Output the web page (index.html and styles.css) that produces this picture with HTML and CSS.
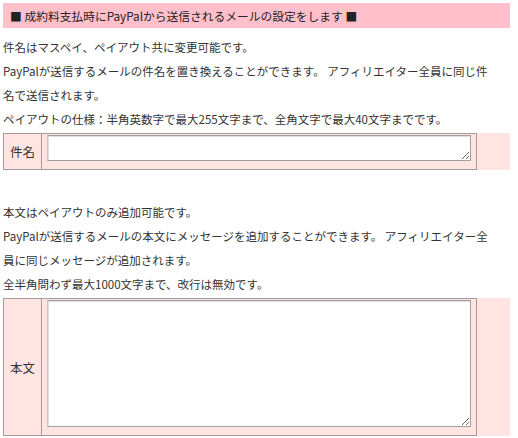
FILE: index.html
```html
<!DOCTYPE html>
<html lang="ja">
<head>
    <meta charset="UTF-8">
    <meta name="viewport" content="width=device-width, initial-scale=1.0">
    <title>メール設定</title>
    <link rel="stylesheet" href="styles.css">
</head>
<body>

    <div class="page">
        <h2 class="title">■ 成約料支払時にPayPalから送信されるメールの設定をします ■</h2>

        <p class="note gap-top">件名はマスペイ、ペイアウト共に変更可能です。</p>
        <p class="note">PayPalが送信するメールの件名を置き換えることができます。 アフィリエイター全員に同じ件名で送信されます。</p>
        <p class="note">ペイアウトの仕様：半角英数字で最大255文字まで、全角文字で最大40文字までです。</p>

        <div class="field-row">
            <table class="field">
                <tr>
                    <th>件名</th>
                    <td><textarea class="subject" name="subject"></textarea></td>
                </tr>
            </table>
        </div>

        <p class="note gap-section">本文はペイアウトのみ追加可能です。</p>
        <p class="note">PayPalが送信するメールの本文にメッセージを追加することができます。 アフィリエイター全員に同じメッセージが追加されます。</p>
        <p class="note">全半角問わず最大1000文字まで、改行は無効です。</p>

        <div class="field-row">
            <table class="field">
                <tr>
                    <th>本文</th>
                    <td><textarea class="body-text" name="body"></textarea></td>
                </tr>
            </table>
        </div>
    </div>

</body>
</html>
```

FILE: styles.css
```css
/* Mail settings page */
body {
    font-family: "Noto Sans CJK JP", sans-serif;
    font-size: 11.5px;
    color: #333;
    margin: 0;
    padding: 0;
    background-color: #fff;
}
.page {
    width: 507px;
    margin: 3px;
}
.title {
    margin: 0;
    padding: 0 7px;
    height: 25px;
    line-height: 25px;
    font-size: 11.75px;
    font-weight: normal;
    color: #222;
    background-color: #ffc0cb;
}
.note {
    margin: 0;
    padding-right: 12px;
    line-height: 24px;
}
.gap-top {
    margin-top: 7px;
}
.gap-section {
    margin-top: 30px;
}
.field-row {
    background-color: #ffe4e1;
    margin-top: 2px;
}
.field {
    width: 474px;
    border-collapse: collapse;
    border: 1px solid #a39a9a;
}
.field th {
    width: 37px;
    padding: 0;
    font-weight: normal;
    font-size: 12.5px;
    color: #333;
    border-right: 1px solid #a39a9a;
    text-align: center;
}
.field td {
    padding: 1px 5px 8px 5px;
}
.field textarea {
    display: block;
    box-sizing: border-box;
    width: 424px;
    margin: 0;
    padding: 2px;
    border: 1px solid #a0a0a0;
    border-left-color: #c8c8c8;
    box-shadow: inset 1px 1px 0 #e0e0e0;
    font-family: inherit;
    font-size: 11px;
    background-color: #fff;
}
.subject {
    height: 26px;
}
.body-text {
    height: 127px;
}
```
